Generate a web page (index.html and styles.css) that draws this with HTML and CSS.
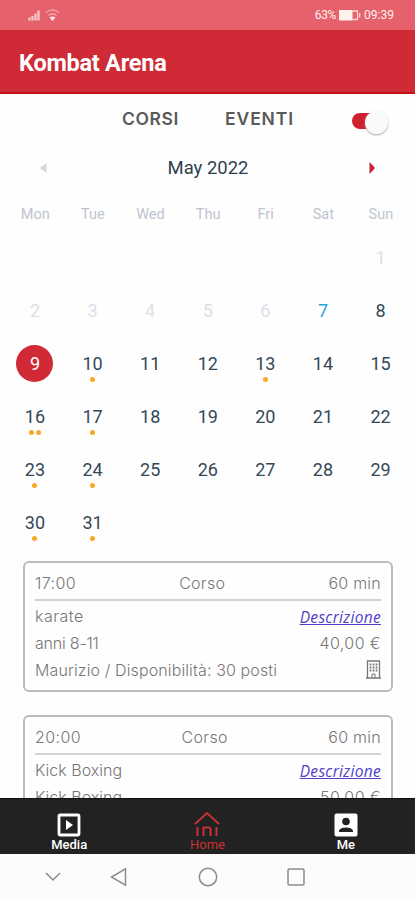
FILE: index.html
```html
<!DOCTYPE html>
<html lang="it">
<head>
<meta charset="utf-8">
<meta name="viewport" content="width=device-width, initial-scale=1">
<title>Kombat Arena</title>
<link rel="stylesheet" href="styles.css">
</head>
<body>
<div class="status">
  <svg class="signals" width="36" height="14" viewBox="0 0 36 14">
    <path d="M1.500 12.500v-3M4.500 12.500V8M7.500 12.500V5.500M10.500 12.500V2.500" stroke="#f9c6c8" stroke-width="2.300" fill="none"/>
    <path d="M18 4.500q6.500-5 13 0M20.500 7.500q4-3.300 8 0" stroke="#f0a3a8" stroke-width="1.500" fill="none"/>
    <path d="M21.500 9.500q3-2.200 6 0l-3 3.500z" fill="#ffe5e5"/>
  </svg>
  <div class="status-right">
    <span class="battery-text">63%</span>
    <svg width="22" height="11" viewBox="0 0 22 11"><rect x="0" y="0" width="13.500" height="10.500" rx="1" fill="#fff2ed"/><path d="M13 1h5.500v8.500H13M20.700 3v4.500" stroke="#ffd8d5" stroke-width="1.300" fill="none"/></svg>
    <span class="clock">09:39</span>
  </div>
</div>
<header class="appbar"><h1>Kombat Arena</h1></header>
<main>
  <div class="filters">
    <span class="tab-corsi">CORSI</span><span class="tab-eventi">EVENTI</span>
    <span class="toggle"><span class="knob"></span></span>
  </div>
  <div class="month">
    <svg width="7" height="12" viewBox="0 0 7 12"><path d="M6.500 1v10L0 6z" fill="#d5d8dc"/></svg>
    <span>May 2022</span>
    <svg width="7" height="12" viewBox="0 0 7 12"><path d="M.5 0v12L6 6z" fill="#cf2030"/></svg>
  </div>
  <div class="weekdays"><span>Mon</span><span>Tue</span><span>Wed</span><span>Thu</span><span>Fri</span><span>Sat</span><span>Sun</span></div>
  <div class="days">
    <div class="day first past">1</div>
    <div class="day past">2</div><div class="day past">3</div><div class="day past">4</div><div class="day past">5</div><div class="day past">6</div><div class="day today">7</div><div class="day">8</div>
    <div class="day selected">9</div><div class="day">10<p class="dots"><i></i></p></div><div class="day">11</div><div class="day">12</div><div class="day">13<p class="dots"><i></i></p></div><div class="day">14</div><div class="day">15</div>
    <div class="day">16<p class="dots"><i></i><i></i></p></div><div class="day">17<p class="dots"><i></i></p></div><div class="day">18</div><div class="day">19</div><div class="day">20</div><div class="day">21</div><div class="day">22</div>
    <div class="day">23<p class="dots"><i></i></p></div><div class="day">24<p class="dots"><i></i></p></div><div class="day">25</div><div class="day">26</div><div class="day">27</div><div class="day">28</div><div class="day">29</div>
    <div class="day">30<p class="dots"><i></i></p></div><div class="day">31<p class="dots"><i></i></p></div>
  </div>
  <section class="card">
    <div class="row head"><span class="time">17:00</span><span class="kind">Corso</span><span class="mins">60 min</span></div>
    <div class="row"><span class="name">karate</span><a class="link">Descrizione</a></div>
    <div class="row"><span class="age">anni 8-11</span><span class="price">40,00 €</span></div>
    <div class="row"><span class="teacher">Maurizio / Disponibilità: 30 posti</span>
      <svg class="building" width="15" height="19" viewBox="0 0 15 19" fill="none" stroke="#777"><path d="M1.500 18V1h12v17M0 18h15" stroke-width="1.300"/><path d="M4.500 3.500v8M7.500 3.500v8M10.500 3.500v8" stroke-width="1.700" stroke-dasharray="2 1"/><path d="M6 18v-4h3v4"/></svg>
    </div>
  </section>
  <section class="card">
    <div class="row head"><span class="time">20:00</span><span class="kind">Corso</span><span class="mins">60 min</span></div>
    <div class="row"><span>Kick Boxing</span><a class="link">Descrizione</a></div>
    <div class="row"><span>Kick Boxing</span><span class="price">50,00 €</span></div>
  </section>
</main>
<nav class="tabs">
  <div class="tab"><svg width="24" height="24" viewBox="0 0 24 24"><rect x="2" y="2" width="20" height="20" rx="1" fill="none" stroke="#fff" stroke-width="2.800"/><path d="M9 7v10l7-5z" fill="#fff"/></svg><span>Media</span></div>
  <div class="tab active"><svg width="28" height="26" viewBox="0 0 28 26" fill="none" stroke="#c93035" stroke-width="2"><path d="M2 13 14 2l12 11"/><path d="M4.500 16v9M10.500 25v-8.500h5q2 0 2 2V25M23.500 16v9"/></svg><span>Home</span></div>
  <div class="tab"><svg width="24" height="24" viewBox="0 0 24 24"><rect x=".5" y=".5" width="23" height="23" rx="2" fill="#fff"/><circle cx="12" cy="8.500" r="3.800" fill="#222"/><path d="M5 19v-1.500q1.500-3 7-3t7 3V19z" fill="#222"/></svg><span>Me</span></div>
</nav>
<footer class="system">
  <svg width="16" height="10" viewBox="0 0 16 10"><path d="m1 1 7 7 7-7"/></svg>
  <svg width="18" height="20" viewBox="0 0 18 20"><path d="M15.500 1.800v16.400L1.500 10z"/></svg>
  <svg width="20" height="20" viewBox="0 0 20 20"><circle cx="10" cy="10" r="8.700"/></svg>
  <svg width="18" height="18" viewBox="0 0 18 18"><rect x="1" y="1" width="16" height="16" rx="1.500"/></svg>
</footer>
</body>
</html>
```
FILE: styles.css
```css
* { box-sizing: border-box; }
body { margin: 0; width: 415px; height: 900px; overflow: hidden; background: #fefefe; font-family: Roboto, sans-serif; display: flex; flex-direction: column; }
svg { display: block; flex: none; }
.status { height: 30px; flex: none; background: #e5626c; display: flex; justify-content: space-between; align-items: center; padding: 0 21px 0 28px; }
.status-right { display: flex; align-items: center; gap: 3px; color: #fff0ed; font-size: 12px; }
.battery-text { letter-spacing: -.3px; }
.appbar { height: 64px; flex: none; background: #cf2a35; border-bottom: 2px solid #bd1017; padding: 0 19px; display: flex; align-items: center; }
h1 { margin: 3px 0 0; font-size: 23.500px; font-weight: 700; color: #fff; letter-spacing: -.25px; }
main { height: 704px; flex: none; overflow: hidden; }
.filters { height: 48px; display: flex; align-items: center; padding-left: 122px; font: 600 17.500px Inter, sans-serif; color: #5a5a5a; }
.tab-corsi { width: 103px; letter-spacing: .6px; }
.tab-eventi { width: 127px; letter-spacing: .9px; }
.toggle { position: relative; width: 36px; height: 24px; margin-top: 8px; display: flex; align-items: center; justify-content: flex-end; }
.toggle::before { content: ""; position: absolute; left: 0; top: 3px; width: 28px; height: 16px; border-radius: 8px; background: #cf2030; }
.knob { position: relative; width: 23px; height: 23px; border-radius: 50%; background: #fafafa; box-shadow: 0 1px 2px #aaa; }
.month { height: 52px; display: flex; justify-content: space-between; align-items: center; padding: 0 39px 0 40px; font-size: 18.500px; color: #2d4150; }
.weekdays { height: 36px; display: grid; grid-template-columns: repeat(7, 57.600px); padding-left: 6.500px; text-align: center; font-size: 14.500px; line-height: 42px; color: #bcc5cf; }
.days { height: 327px; display: grid; grid-template-columns: repeat(7, 57.600px); grid-auto-rows: 53px; padding: 9px 0 0 6.200px; justify-items: center; }
.day { width: 37px; height: 37px; line-height: 38px; text-align: center; font-size: 18px; color: #354857; }
.first { grid-column: 7; }
.past { color: #d9e1e8; }
.today { color: #25a5e0; }
.selected { background: #cf2a35; color: #fff; border-radius: 50%; }
.dots { margin: -6px 0 0; display: flex; justify-content: center; gap: 2px; }
.dots i { width: 5px; height: 5px; border-radius: 50%; background: #f8a72b; }
.card { width: 370px; height: 131px; margin: 4px 0 23px 23px; border: 2px solid #bbb; border-radius: 6px; padding: 6px 10px; font: 300 16px Inter, sans-serif; color: #777; }
.row { display: flex; justify-content: space-between; align-items: center; height: 27px; white-space: nowrap; }
.head { height: 32px; border-bottom: 2px solid #d2d2d2; padding-bottom: 2px; margin-bottom: 1px; }
.time { letter-spacing: .4px; }
.kind { letter-spacing: .3px; }
.name { letter-spacing: .5px; }
.age { letter-spacing: -.2px; }
.teacher { letter-spacing: .12px; }
.price { letter-spacing: .4px; }
.mins { letter-spacing: .25px; }
.link { padding-top: 2px; font: italic 400 15.500px "Open Sans", sans-serif; letter-spacing: .3px; color: #5040c8; text-decoration: underline; }
.tabs { height: 56px; flex: none; background: #222; border-top: 1px solid #111; display: flex; justify-content: space-around; color: #fff; font-size: 13px; font-weight: 500; }
.tab { width: 138px; padding-top: 14px; display: flex; flex-direction: column; align-items: center; }
.tab span { line-height: 15px; }
.active { padding-top: 12px; color: #c93035; font-weight: 400; }
.system { height: 46px; flex: none; display: flex; align-items: center; padding: 0 0 0 45px; background: #fcfcfc; }
.system svg { fill: none; stroke: #8c8c8c; stroke-width: 1.500; }
.system svg:nth-child(2) { margin-left: 49px; }
.system svg:nth-child(3) { margin-left: 70px; }
.system svg:nth-child(4) { margin-left: 69px; }
```
